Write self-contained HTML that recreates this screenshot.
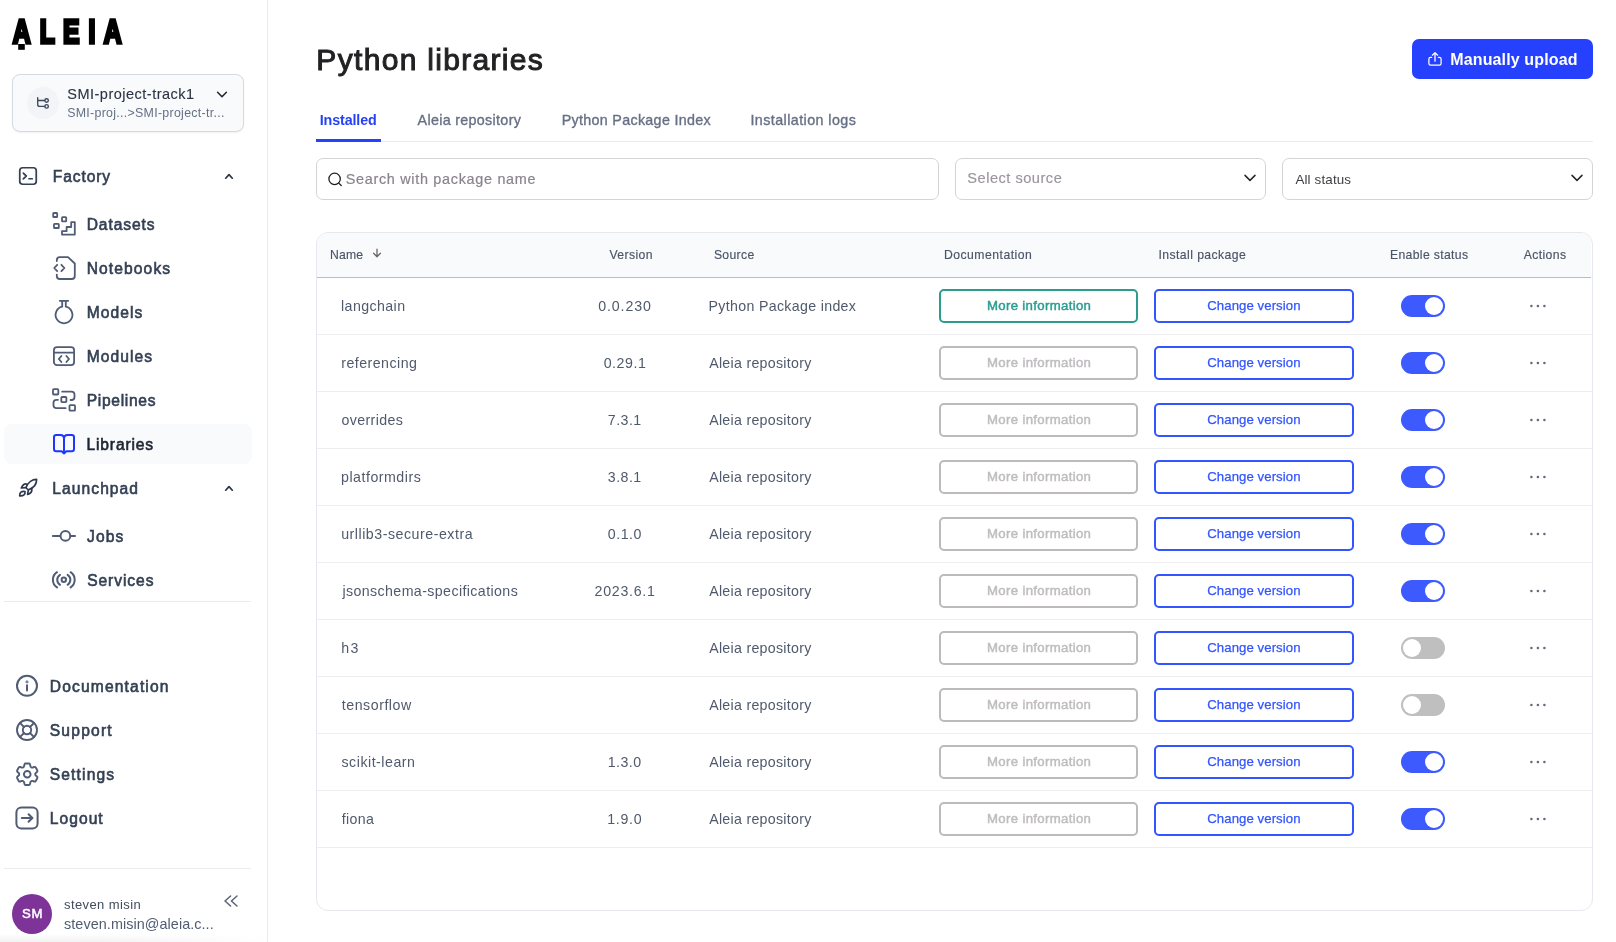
<!DOCTYPE html>
<html lang="en"><head><meta charset="utf-8"><title>Python libraries</title>
<style>
html,body{margin:0;padding:0;background:#fff;}
body{width:1616px;height:942px;position:relative;overflow:hidden;font-family:"Liberation Sans",sans-serif;}
.t{position:absolute;white-space:nowrap;display:block;}
svg{display:block;overflow:visible;}
aside,main{will-change:transform;}
</style></head><body>
<aside>
<div style="position:absolute;left:0px;top:0px;width:267px;height:942px;background:#fff;border-right:1px solid #e9ebf2;"></div>
<div style="position:absolute;left:0px;top:934px;width:267px;height:8px;background:linear-gradient(to bottom,rgba(238,238,240,0),rgba(230,230,233,.55));-webkit-mask-image:linear-gradient(to right,#000 35%,transparent 100%);mask-image:linear-gradient(to right,#000 35%,transparent 100%);"></div>
<svg style="position:absolute;left:0;top:0" width="140" height="60" viewBox="0 0 140 60"><text x="17.19 53.78 85.19 119.63 140.23" y="0" transform="translate(0,42.5) scale(0.74,1)" font-family="Liberation Sans, sans-serif" font-weight="700" font-size="33.4" fill="#000" stroke="#000" stroke-width="3.0" stroke-linejoin="miter" stroke-miterlimit="2" vector-effect="non-scaling-stroke">ALEIA</text><rect x="18.2" y="44" width="6.6" height="5.8" fill="#000"/></svg>
<div style="position:absolute;left:12px;top:74px;width:232px;height:58px;box-sizing:border-box;background:#f9fafb;border:1px solid #d5d9e3;border-radius:8px;box-shadow:0 1px 2px rgba(16,24,40,.06);"></div>
<div style="position:absolute;left:27px;top:87px;width:32px;height:32px;background:#f2f4f7;border-radius:50%;"></div>
<svg style="position:absolute;left:35px;top:95px;" width="16" height="16" viewBox="0 0 16 16" fill="none" stroke="#3d485c" stroke-width="1.35" stroke-linecap="round" stroke-linejoin="round"><path d="M2.7 2.6V9.4Q2.7 11.4 4.7 11.4H9.7M2.7 5.5H9.7"/><circle cx="11.6" cy="5.5" r="1.75"/><circle cx="11.6" cy="11.4" r="1.75"/></svg>
<span class="t" style="left:67.28px;top:85.01px;font-size:14.5px;line-height:19px;color:#2b3445;letter-spacing:0.493px;-webkit-text-stroke:0.12px #2b3445;">SMI-project-track1</span>
<span class="t" style="left:67.21px;top:105.21px;font-size:12.4px;line-height:16px;color:#667085;letter-spacing:0.288px;">SMI-proj...&gt;SMI-project-tr...</span>
<svg style="position:absolute;left:216px;top:89px;" width="12" height="12" viewBox="0 0 12 12" fill="none" stroke="#1d2433" stroke-width="1.5" stroke-linecap="round" stroke-linejoin="round"><path d="M1.6 3.2L6 7.8L10.4 3.2"/></svg>
<svg style="position:absolute;left:17px;top:165px;" width="22" height="22" viewBox="0 0 24 24" fill="none" stroke="#344054" stroke-width="1.9" stroke-linecap="round" stroke-linejoin="round"><rect x="3" y="3" width="18" height="18" rx="3.2"/><path d="M6.9 8.9L10.1 12L6.9 15.1M13.1 15H16.6"/></svg>
<span class="t" style="left:52.83px;top:166.81px;font-size:15.6px;line-height:20px;color:#344054;letter-spacing:0.892px;-webkit-text-stroke:0.6px #344054;">Factory</span>
<svg style="position:absolute;left:223px;top:169.9px;" width="12" height="12" viewBox="0 0 12 12" fill="none" stroke="#2b3445" stroke-width="1.7" stroke-linecap="round" stroke-linejoin="round"><path d="M2.7 8.2L6 4.6L9.3 8.2"/></svg>
<div style="position:absolute;left:4px;top:424px;width:248px;height:40px;background:#f9fafb;border-radius:8px;"></div>
<span class="t" style="left:86.66px;top:215.00px;font-size:15.6px;line-height:20px;color:#344054;letter-spacing:0.901px;-webkit-text-stroke:0.6px #344054;">Datasets</span>
<span class="t" style="left:86.66px;top:259.00px;font-size:15.6px;line-height:20px;color:#344054;letter-spacing:1.113px;-webkit-text-stroke:0.6px #344054;">Notebooks</span>
<span class="t" style="left:86.66px;top:303.00px;font-size:15.6px;line-height:20px;color:#344054;letter-spacing:1.098px;-webkit-text-stroke:0.6px #344054;">Models</span>
<span class="t" style="left:86.66px;top:347.00px;font-size:15.6px;line-height:20px;color:#344054;letter-spacing:1.089px;-webkit-text-stroke:0.6px #344054;">Modules</span>
<span class="t" style="left:86.66px;top:391.00px;font-size:15.6px;line-height:20px;color:#344054;letter-spacing:0.695px;-webkit-text-stroke:0.6px #344054;">Pipelines</span>
<span class="t" style="left:86.50px;top:435.00px;font-size:15.6px;line-height:20px;color:#1b2433;letter-spacing:0.851px;-webkit-text-stroke:0.6px #1b2433;">Libraries</span>
<svg style="position:absolute;left:52px;top:212px;" width="24" height="24" viewBox="0 0 24 24" fill="none" stroke="#505c74" stroke-width="1.8" stroke-linecap="round" stroke-linejoin="round"><rect x="1.2" y="1" width="4" height="4" rx=".6"/><rect x="10" y="5.2" width="4.2" height="4.2" rx=".6"/><rect x="2" y="11.8" width="4.8" height="4.2" rx=".6"/><path d="M10 22.6V19.2H14.6V15H19.2V10.2H22.8V22.6Z"/></svg>
<svg style="position:absolute;left:52px;top:256px;" width="24" height="24" viewBox="0 0 24 24" fill="none" stroke="#505c74" stroke-width="1.8" stroke-linecap="round" stroke-linejoin="round"><path d="M4.8 5V4.2Q4.8 1.2 7.8 1.2H16L22.8 7.5V20Q22.8 23 19.8 23H7.8Q4.8 23 4.8 20V18.6"/><path d="M5.2 8.8L2.2 12L5.2 15.2M9.4 8.8L12.4 12L9.4 15.2"/></svg>
<svg style="position:absolute;left:52px;top:300px;" width="24" height="24" viewBox="0 0 24 24" fill="none" stroke="#505c74" stroke-width="1.8" stroke-linecap="round" stroke-linejoin="round"><path d="M7.8 .8H16.2M10.2 .8V6.7M13.8 .8V6.7M10.2 6.7A8.4 8.4 0 1 0 13.8 6.7"/></svg>
<svg style="position:absolute;left:52px;top:344px;" width="24" height="24" viewBox="0 0 24 24" fill="none" stroke="#505c74" stroke-width="1.8" stroke-linecap="round" stroke-linejoin="round"><rect x="1.9" y="3.2" width="20.2" height="17.9" rx="3.2"/><path d="M1.9 8.7H22.1M9.4 12L6.8 15L9.4 18M14.4 12L17 15L14.4 18"/></svg>
<svg style="position:absolute;left:52px;top:388px;" width="24" height="24" viewBox="0 0 24 24" fill="none" stroke="#505c74" stroke-width="1.8" stroke-linecap="round" stroke-linejoin="round"><rect x="1" y="1.2" width="5.3" height="5.3" rx=".8"/><rect x="9.3" y="9" width="5.1" height="5.1" rx=".8"/><rect x="17.5" y="17.2" width="5.5" height="5.5" rx=".8"/><path d="M10.2 3.7H19.5Q22.5 3.7 22.5 6.7V9Q22.5 12 19.5 12H18.6M13.6 20.2H4.5Q1.5 20.2 1.5 17.2V14.8Q1.5 11.8 4.5 11.8H6"/></svg>
<svg style="position:absolute;left:52px;top:432px;" width="24" height="24" viewBox="0 0 24 24" fill="none" stroke="#1f36ff" stroke-width="2.0" stroke-linecap="round" stroke-linejoin="round"><path d="M12 21.4L9.6 19.3H4.3Q2 19.3 2 17V5.3Q2 3 4.3 3H8.5Q12 3 12 6.5V21.4L14.4 19.3H19.7Q22 19.3 22 17V5.3Q22 3 19.7 3H15.5Q12 3 12 6.5"/></svg>
<svg style="position:absolute;left:12px;top:472px;" width="32" height="32" viewBox="0 0 32 32" fill="none" stroke="#2d3850" stroke-width="1.7" stroke-linecap="round" stroke-linejoin="round"><path d="M24.6 7.3C20.5 7.2 16 10 14 15.6Q15 17.2 16.6 17.8C21.5 16 24.8 12 24.6 7.3Z"/><path d="M14.9 12.3Q11.5 10.8 9.3 16L13.9 15.7"/><path d="M16.4 17.9L15.6 22.4Q20.6 21 19.7 16.4"/><path d="M7.7 23.9C7.5 20.5 9.5 18.8 13 19.5C13.5 22.5 11.5 24.3 7.7 23.9Z"/></svg>
<span class="t" style="left:52.37px;top:479.00px;font-size:15.6px;line-height:20px;color:#344054;letter-spacing:1.056px;-webkit-text-stroke:0.6px #344054;">Launchpad</span>
<svg style="position:absolute;left:223px;top:481.90000000000003px;" width="12" height="12" viewBox="0 0 12 12" fill="none" stroke="#2b3445" stroke-width="1.7" stroke-linecap="round" stroke-linejoin="round"><path d="M2.7 8.2L6 4.6L9.3 8.2"/></svg>
<span class="t" style="left:87.08px;top:527.00px;font-size:15.6px;line-height:20px;color:#344054;letter-spacing:1.133px;-webkit-text-stroke:0.6px #344054;">Jobs</span>
<span class="t" style="left:87.13px;top:571.00px;font-size:15.6px;line-height:20px;color:#344054;letter-spacing:0.931px;-webkit-text-stroke:0.6px #344054;">Services</span>
<svg style="position:absolute;left:52px;top:524px;" width="24" height="24" viewBox="0 0 24 24" fill="none" stroke="#505c74" stroke-width="2.0" stroke-linecap="round" stroke-linejoin="round"><path d="M.9 11.9H7.8M19.2 11.9H23"/><circle cx="13.4" cy="11.9" r="4.85"/></svg>
<svg style="position:absolute;left:52px;top:568px;" width="24" height="24" viewBox="0 0 24 24" fill="none" stroke="#505c74" stroke-width="2.0" stroke-linecap="round" stroke-linejoin="round"><circle cx="11.8" cy="11.8" r="2.2"/><path d="M5 4.2A9.1 9.1 0 0 0 5 19.4M18.6 4.2A9.1 9.1 0 0 1 18.6 19.4M8 6.8A5.9 5.9 0 0 0 8 16.8M15.6 6.8A5.9 5.9 0 0 1 15.6 16.8"/></svg>
<div style="position:absolute;left:4px;top:601px;width:247px;height:1px;background:#eaecf0;"></div>
<span class="t" style="left:49.77px;top:676.70px;font-size:15.6px;line-height:20px;color:#344054;letter-spacing:1.153px;-webkit-text-stroke:0.6px #344054;">Documentation</span>
<span class="t" style="left:49.74px;top:720.70px;font-size:15.6px;line-height:20px;color:#344054;letter-spacing:1.223px;-webkit-text-stroke:0.6px #344054;">Support</span>
<span class="t" style="left:49.74px;top:764.70px;font-size:15.6px;line-height:20px;color:#344054;letter-spacing:1.153px;-webkit-text-stroke:0.6px #344054;">Settings</span>
<span class="t" style="left:49.77px;top:808.70px;font-size:15.6px;line-height:20px;color:#344054;letter-spacing:1.049px;-webkit-text-stroke:0.6px #344054;">Logout</span>
<svg style="position:absolute;left:15px;top:674px;" width="24" height="24" viewBox="0 0 24 24" fill="none" stroke="#505c74" stroke-width="2.0" stroke-linecap="round" stroke-linejoin="round"><circle cx="12" cy="11.8" r="10"/><path d="M12 11.2V16.4"/><circle cx="12" cy="7.9" r=".45" fill="#505c74"/></svg>
<svg style="position:absolute;left:15px;top:718px;" width="24" height="24" viewBox="0 0 24 24" fill="none" stroke="#505c74" stroke-width="1.9" stroke-linecap="round" stroke-linejoin="round"><circle cx="12" cy="12" r="10"/><circle cx="12" cy="12" r="4.2"/><path d="M4.9 4.9L9 9M19.1 4.9L15 9M4.9 19.1L9 15M19.1 19.1L15 15"/></svg>
<svg style="position:absolute;left:12.8px;top:759.7px;" width="28.5" height="28.5" viewBox="0 0 24 24" fill="none" stroke="#505c74" stroke-width="1.6" stroke-linecap="round" stroke-linejoin="round"><path d="M9.594 3.94c.09-.542.56-.94 1.11-.94h2.593c.55 0 1.02.398 1.11.94l.213 1.281c.063.374.313.686.645.87.074.04.147.083.22.127.324.196.72.257 1.075.124l1.217-.456a1.125 1.125 0 011.37.49l1.296 2.247a1.125 1.125 0 01-.26 1.431l-1.003.827c-.293.24-.438.613-.431.992a6.759 6.759 0 010 .255c-.007.378.138.75.43.99l1.005.828c.424.35.534.954.26 1.43l-1.298 2.247a1.125 1.125 0 01-1.369.491l-1.217-.456c-.355-.133-.75-.072-1.076.124a6.57 6.57 0 01-.22.128c-.331.183-.581.495-.644.869l-.213 1.28c-.09.543-.56.941-1.11.941h-2.594c-.55 0-1.02-.398-1.11-.94l-.213-1.281c-.062-.374-.312-.686-.644-.87a6.52 6.52 0 01-.22-.127c-.325-.196-.72-.257-1.076-.124l-1.217.456a1.125 1.125 0 01-1.369-.49l-1.297-2.247a1.125 1.125 0 01.26-1.431l1.004-.827c.292-.24.437-.613.43-.992a6.932 6.932 0 010-.255c.007-.378-.138-.75-.43-.99l-1.004-.828a1.125 1.125 0 01-.26-1.43l1.297-2.247a1.125 1.125 0 011.37-.491l1.216.456c.356.133.751.072 1.076-.124.072-.044.146-.087.22-.128.332-.183.582-.495.644-.869l.214-1.281z"/><circle cx="12" cy="12" r="2.8"/></svg>
<svg style="position:absolute;left:15px;top:806px;" width="24" height="24" viewBox="0 0 24 24" fill="none" stroke="#505c74" stroke-width="2.0" stroke-linecap="round" stroke-linejoin="round"><rect x="1.4" y="1.4" width="21.2" height="21.2" rx="5"/><path d="M6.8 12H17.2M13.6 8.2L17.4 12L13.6 15.8"/></svg>
<div style="position:absolute;left:4px;top:868px;width:247px;height:1px;background:#eaecf0;"></div>
<div style="position:absolute;left:12px;top:894px;width:40px;height:40px;background:#7d3397;border-radius:50%;"></div>
<span class="t" style="left:21.91px;top:905.41px;font-size:13.2px;line-height:17px;color:#fff;letter-spacing:0.752px;-webkit-text-stroke:0.5px #fff;">SM</span>
<span class="t" style="left:64.05px;top:896.00px;font-size:13px;line-height:17px;color:#414c60;letter-spacing:0.396px;">steven misin</span>
<span class="t" style="left:64.02px;top:914.80px;font-size:14.4px;line-height:19px;color:#505c72;letter-spacing:0.067px;">steven.misin@aleia.c...</span>
<svg style="position:absolute;left:222px;top:893px;" width="18" height="16" viewBox="0 0 18 16" fill="none" stroke="#5a6478" stroke-width="1.5" stroke-linecap="round" stroke-linejoin="round"><path d="M8.6 3L3 8L8.6 13M15 3L9.4 8L15 13"/></svg>
</aside>
<main>
<span class="t" style="left:316.37px;top:39.81px;font-size:30px;line-height:39px;color:#222224;letter-spacing:1.313px;-webkit-text-stroke:1.0px #222224;">Python libraries</span>
<div style="position:absolute;left:1412px;top:39px;width:181px;height:40px;background:#2541fd;border-radius:7px;"></div>
<svg style="position:absolute;left:1427px;top:51px;" width="16" height="16" viewBox="0 0 16 16" fill="none" stroke="#fff" stroke-width="1.25" stroke-linecap="round" stroke-linejoin="round"><path d="M4.6 6.4H3.6Q1.9 6.4 1.9 8.1V12.4Q1.9 14.1 3.6 14.1H12.4Q14.1 14.1 14.1 12.4V8.1Q14.1 6.4 12.4 6.4H11.4M8 10.2V1.8M5.4 4.2L8 1.6L10.6 4.2"/></svg>
<span class="t" style="left:1450.24px;top:49.00px;font-size:16px;line-height:21px;color:#fff;letter-spacing:0.134px;font-weight:700;">Manually upload</span>
<div style="position:absolute;left:316px;top:141px;width:1277px;height:1px;background:#eaecf0;"></div>
<div style="position:absolute;left:316px;top:139px;width:65px;height:3px;background:#2541fd;"></div>
<span class="t" style="left:319.65px;top:111.20px;font-size:14.3px;line-height:19px;color:#2541f5;letter-spacing:-0.106px;font-weight:700;">Installed</span>
<span class="t" style="left:417.60px;top:111.20px;font-size:14.3px;line-height:19px;color:#667085;letter-spacing:0.315px;-webkit-text-stroke:0.35px #667085;">Aleia repository</span>
<span class="t" style="left:561.67px;top:111.20px;font-size:14.3px;line-height:19px;color:#667085;letter-spacing:0.312px;-webkit-text-stroke:0.35px #667085;">Python Package Index</span>
<span class="t" style="left:750.40px;top:111.20px;font-size:14.3px;line-height:19px;color:#667085;letter-spacing:0.430px;-webkit-text-stroke:0.35px #667085;">Installation logs</span>
<div style="position:absolute;left:316px;top:158px;width:623px;height:42px;box-sizing:border-box;background:#fff;border:1px solid #d4d3d8;border-radius:7px;"></div>
<svg style="position:absolute;left:327px;top:170.6px;" width="16" height="16" viewBox="0 0 16 16" fill="none" stroke="#1c1c1e" stroke-width="1.25" stroke-linecap="round" stroke-linejoin="round"><circle cx="7.6" cy="7.9" r="5.7"/><path d="M11.8 12.1L14.2 14.5"/></svg>
<span class="t" style="left:345.69px;top:170.01px;font-size:14.4px;line-height:19px;color:#8a838e;letter-spacing:0.706px;-webkit-text-stroke:0.2px #8a838e;">Search with package name</span>
<div style="position:absolute;left:955px;top:158px;width:311px;height:42px;box-sizing:border-box;background:#fff;border:1px solid #d4d3d8;border-radius:7px;"></div>
<span class="t" style="left:967.28px;top:168.80px;font-size:14.6px;line-height:19px;color:#9a949c;letter-spacing:0.506px;-webkit-text-stroke:0.15px #9a949c;">Select source</span>
<svg style="position:absolute;left:1243px;top:172px;" width="14" height="12" viewBox="0 0 14 12" fill="none" stroke="#26262b" stroke-width="1.5" stroke-linecap="round" stroke-linejoin="round"><path d="M2 3.4L7 8.4L12 3.4"/></svg>
<div style="position:absolute;left:1282px;top:158px;width:311px;height:42px;box-sizing:border-box;background:#fff;border:1px solid #d4d3d8;border-radius:7px;"></div>
<span class="t" style="left:1295.41px;top:171.00px;font-size:13.4px;line-height:17px;color:#3d3d42;letter-spacing:0.147px;">All status</span>
<svg style="position:absolute;left:1570px;top:172px;" width="14" height="12" viewBox="0 0 14 12" fill="none" stroke="#26262b" stroke-width="1.5" stroke-linecap="round" stroke-linejoin="round"><path d="M2 3.4L7 8.4L12 3.4"/></svg>
<div style="position:absolute;left:316px;top:232px;width:1277px;height:679px;box-sizing:border-box;background:#fff;border:1px solid #e7e8ee;border-radius:12px;overflow:hidden;"><div style="position:absolute;left:0;top:0;width:1274px;height:44px;background:#f9fafb;"></div><div style="position:absolute;left:0;top:44px;width:1274px;height:1px;background:#bfbbbf;"></div></div>
<span class="t" style="left:330.11px;top:246.81px;font-size:12.2px;line-height:16px;color:#4a5567;letter-spacing:0.152px;-webkit-text-stroke:0.15px #4a5567;">Name</span>
<svg style="position:absolute;left:371px;top:247px;" width="12" height="12" viewBox="0 0 12 12" fill="none" stroke="#6d6470" stroke-width="1.3" stroke-linecap="round" stroke-linejoin="round"><path d="M6 2.2V9.6M2.6 6.2L6 9.8L9.4 6.2"/></svg>
<span class="t" style="left:609.48px;top:246.81px;font-size:12.2px;line-height:16px;color:#4a5567;letter-spacing:0.397px;-webkit-text-stroke:0.15px #4a5567;">Version</span>
<span class="t" style="left:713.91px;top:246.81px;font-size:12.2px;line-height:16px;color:#4a5567;letter-spacing:0.334px;-webkit-text-stroke:0.15px #4a5567;">Source</span>
<span class="t" style="left:943.90px;top:246.81px;font-size:12.2px;line-height:16px;color:#4a5567;letter-spacing:0.498px;-webkit-text-stroke:0.15px #4a5567;">Documentation</span>
<span class="t" style="left:1158.55px;top:246.81px;font-size:12.2px;line-height:16px;color:#4a5567;letter-spacing:0.420px;-webkit-text-stroke:0.15px #4a5567;">Install package</span>
<span class="t" style="left:1389.91px;top:246.81px;font-size:12.2px;line-height:16px;color:#4a5567;letter-spacing:0.361px;-webkit-text-stroke:0.15px #4a5567;">Enable status</span>
<span class="t" style="left:1523.65px;top:246.81px;font-size:12.2px;line-height:16px;color:#4a5567;letter-spacing:0.403px;-webkit-text-stroke:0.15px #4a5567;">Actions</span>
<div style="position:absolute;left:317px;top:334px;width:1275px;height:1px;background:#eeeef1;"></div>
<span class="t" style="left:341.06px;top:297.00px;font-size:14.2px;line-height:18px;color:#505a6d;letter-spacing:0.411px;">langchain</span>
<span class="t" style="left:598.20px;top:297.00px;font-size:14.2px;line-height:18px;color:#505a6d;letter-spacing:0.890px;">0.0.230</span>
<span class="t" style="left:708.46px;top:297.00px;font-size:14.2px;line-height:18px;color:#505a6d;letter-spacing:0.331px;">Python Package index</span>
<div style="position:absolute;left:939px;top:289px;width:199px;height:34px;box-sizing:border-box;border:2px solid #2a9d8f;border-radius:5px;background:#fff;"></div>
<span class="t" style="left:986.91px;top:297.00px;font-size:13.2px;line-height:17px;color:#2a9d8f;letter-spacing:0.338px;-webkit-text-stroke:0.45px #2a9d8f;">More information</span>
<div style="position:absolute;left:1154px;top:289px;width:200px;height:34px;box-sizing:border-box;border:2px solid #3355ff;border-radius:5px;background:#fff;"></div>
<span class="t" style="left:1207.24px;top:297.00px;font-size:13.2px;line-height:17px;color:#3355ff;letter-spacing:0.068px;-webkit-text-stroke:0.25px #3355ff;">Change version</span>
<div style="position:absolute;left:1401px;top:295px;width:44px;height:22px;background:#3d5afe;border-radius:11px;"><div style="position:absolute;left:24px;top:2px;width:18px;height:18px;border-radius:50%;background:#fff"></div></div>
<svg style="position:absolute;left:1528px;top:302px" width="20" height="8" viewBox="0 0 20 8" fill="#70667a"><circle cx="3.4" cy="4" r="1.3"/><circle cx="9.9" cy="4" r="1.3"/><circle cx="16.4" cy="4" r="1.3"/></svg>
<div style="position:absolute;left:317px;top:391px;width:1275px;height:1px;background:#eeeef1;"></div>
<span class="t" style="left:341.18px;top:354.00px;font-size:14.2px;line-height:18px;color:#505a6d;letter-spacing:0.480px;">referencing</span>
<span class="t" style="left:603.63px;top:354.00px;font-size:14.2px;line-height:18px;color:#505a6d;letter-spacing:0.574px;">0.29.1</span>
<span class="t" style="left:709.17px;top:354.00px;font-size:14.2px;line-height:18px;color:#505a6d;letter-spacing:0.291px;">Aleia repository</span>
<div style="position:absolute;left:939px;top:346px;width:199px;height:34px;box-sizing:border-box;border:2px solid #bdb9bc;border-radius:5px;background:#fff;"></div>
<span class="t" style="left:987.07px;top:354.00px;font-size:13.2px;line-height:17px;color:#bfbcbf;letter-spacing:0.325px;-webkit-text-stroke:0.45px #bfbcbf;">More information</span>
<div style="position:absolute;left:1154px;top:346px;width:200px;height:34px;box-sizing:border-box;border:2px solid #3355ff;border-radius:5px;background:#fff;"></div>
<span class="t" style="left:1207.24px;top:354.00px;font-size:13.2px;line-height:17px;color:#3355ff;letter-spacing:0.068px;-webkit-text-stroke:0.25px #3355ff;">Change version</span>
<div style="position:absolute;left:1401px;top:352px;width:44px;height:22px;background:#3d5afe;border-radius:11px;"><div style="position:absolute;left:24px;top:2px;width:18px;height:18px;border-radius:50%;background:#fff"></div></div>
<svg style="position:absolute;left:1528px;top:359px" width="20" height="8" viewBox="0 0 20 8" fill="#70667a"><circle cx="3.4" cy="4" r="1.3"/><circle cx="9.9" cy="4" r="1.3"/><circle cx="16.4" cy="4" r="1.3"/></svg>
<div style="position:absolute;left:317px;top:448px;width:1275px;height:1px;background:#eeeef1;"></div>
<span class="t" style="left:341.43px;top:411.00px;font-size:14.2px;line-height:18px;color:#505a6d;letter-spacing:0.382px;">overrides</span>
<span class="t" style="left:607.77px;top:411.00px;font-size:14.2px;line-height:18px;color:#505a6d;letter-spacing:0.476px;">7.3.1</span>
<span class="t" style="left:709.17px;top:411.00px;font-size:14.2px;line-height:18px;color:#505a6d;letter-spacing:0.291px;">Aleia repository</span>
<div style="position:absolute;left:939px;top:403px;width:199px;height:34px;box-sizing:border-box;border:2px solid #bdb9bc;border-radius:5px;background:#fff;"></div>
<span class="t" style="left:987.07px;top:411.00px;font-size:13.2px;line-height:17px;color:#bfbcbf;letter-spacing:0.325px;-webkit-text-stroke:0.45px #bfbcbf;">More information</span>
<div style="position:absolute;left:1154px;top:403px;width:200px;height:34px;box-sizing:border-box;border:2px solid #3355ff;border-radius:5px;background:#fff;"></div>
<span class="t" style="left:1207.24px;top:411.00px;font-size:13.2px;line-height:17px;color:#3355ff;letter-spacing:0.068px;-webkit-text-stroke:0.25px #3355ff;">Change version</span>
<div style="position:absolute;left:1401px;top:409px;width:44px;height:22px;background:#3d5afe;border-radius:11px;"><div style="position:absolute;left:24px;top:2px;width:18px;height:18px;border-radius:50%;background:#fff"></div></div>
<svg style="position:absolute;left:1528px;top:416px" width="20" height="8" viewBox="0 0 20 8" fill="#70667a"><circle cx="3.4" cy="4" r="1.3"/><circle cx="9.9" cy="4" r="1.3"/><circle cx="16.4" cy="4" r="1.3"/></svg>
<div style="position:absolute;left:317px;top:505px;width:1275px;height:1px;background:#eeeef1;"></div>
<span class="t" style="left:341.05px;top:468.00px;font-size:14.2px;line-height:18px;color:#505a6d;letter-spacing:0.506px;">platformdirs</span>
<span class="t" style="left:607.79px;top:468.00px;font-size:14.2px;line-height:18px;color:#505a6d;letter-spacing:0.472px;">3.8.1</span>
<span class="t" style="left:709.17px;top:468.00px;font-size:14.2px;line-height:18px;color:#505a6d;letter-spacing:0.291px;">Aleia repository</span>
<div style="position:absolute;left:939px;top:460px;width:199px;height:34px;box-sizing:border-box;border:2px solid #bdb9bc;border-radius:5px;background:#fff;"></div>
<span class="t" style="left:987.07px;top:468.00px;font-size:13.2px;line-height:17px;color:#bfbcbf;letter-spacing:0.325px;-webkit-text-stroke:0.45px #bfbcbf;">More information</span>
<div style="position:absolute;left:1154px;top:460px;width:200px;height:34px;box-sizing:border-box;border:2px solid #3355ff;border-radius:5px;background:#fff;"></div>
<span class="t" style="left:1207.24px;top:468.00px;font-size:13.2px;line-height:17px;color:#3355ff;letter-spacing:0.068px;-webkit-text-stroke:0.25px #3355ff;">Change version</span>
<div style="position:absolute;left:1401px;top:466px;width:44px;height:22px;background:#3d5afe;border-radius:11px;"><div style="position:absolute;left:24px;top:2px;width:18px;height:18px;border-radius:50%;background:#fff"></div></div>
<svg style="position:absolute;left:1528px;top:473px" width="20" height="8" viewBox="0 0 20 8" fill="#70667a"><circle cx="3.4" cy="4" r="1.3"/><circle cx="9.9" cy="4" r="1.3"/><circle cx="16.4" cy="4" r="1.3"/></svg>
<div style="position:absolute;left:317px;top:562px;width:1275px;height:1px;background:#eeeef1;"></div>
<span class="t" style="left:341.18px;top:525.00px;font-size:14.2px;line-height:18px;color:#505a6d;letter-spacing:0.526px;">urllib3-secure-extra</span>
<span class="t" style="left:607.69px;top:525.00px;font-size:14.2px;line-height:18px;color:#505a6d;letter-spacing:0.568px;">0.1.0</span>
<span class="t" style="left:709.17px;top:525.00px;font-size:14.2px;line-height:18px;color:#505a6d;letter-spacing:0.291px;">Aleia repository</span>
<div style="position:absolute;left:939px;top:517px;width:199px;height:34px;box-sizing:border-box;border:2px solid #bdb9bc;border-radius:5px;background:#fff;"></div>
<span class="t" style="left:987.07px;top:525.00px;font-size:13.2px;line-height:17px;color:#bfbcbf;letter-spacing:0.325px;-webkit-text-stroke:0.45px #bfbcbf;">More information</span>
<div style="position:absolute;left:1154px;top:517px;width:200px;height:34px;box-sizing:border-box;border:2px solid #3355ff;border-radius:5px;background:#fff;"></div>
<span class="t" style="left:1207.24px;top:525.00px;font-size:13.2px;line-height:17px;color:#3355ff;letter-spacing:0.068px;-webkit-text-stroke:0.25px #3355ff;">Change version</span>
<div style="position:absolute;left:1401px;top:523px;width:44px;height:22px;background:#3d5afe;border-radius:11px;"><div style="position:absolute;left:24px;top:2px;width:18px;height:18px;border-radius:50%;background:#fff"></div></div>
<svg style="position:absolute;left:1528px;top:530px" width="20" height="8" viewBox="0 0 20 8" fill="#70667a"><circle cx="3.4" cy="4" r="1.3"/><circle cx="9.9" cy="4" r="1.3"/><circle cx="16.4" cy="4" r="1.3"/></svg>
<div style="position:absolute;left:317px;top:619px;width:1275px;height:1px;background:#eeeef1;"></div>
<span class="t" style="left:342.42px;top:582.00px;font-size:14.2px;line-height:18px;color:#505a6d;letter-spacing:0.406px;">jsonschema-specifications</span>
<span class="t" style="left:594.62px;top:582.00px;font-size:14.2px;line-height:18px;color:#505a6d;letter-spacing:0.712px;">2023.6.1</span>
<span class="t" style="left:709.17px;top:582.00px;font-size:14.2px;line-height:18px;color:#505a6d;letter-spacing:0.291px;">Aleia repository</span>
<div style="position:absolute;left:939px;top:574px;width:199px;height:34px;box-sizing:border-box;border:2px solid #bdb9bc;border-radius:5px;background:#fff;"></div>
<span class="t" style="left:987.07px;top:582.00px;font-size:13.2px;line-height:17px;color:#bfbcbf;letter-spacing:0.325px;-webkit-text-stroke:0.45px #bfbcbf;">More information</span>
<div style="position:absolute;left:1154px;top:574px;width:200px;height:34px;box-sizing:border-box;border:2px solid #3355ff;border-radius:5px;background:#fff;"></div>
<span class="t" style="left:1207.24px;top:582.00px;font-size:13.2px;line-height:17px;color:#3355ff;letter-spacing:0.068px;-webkit-text-stroke:0.25px #3355ff;">Change version</span>
<div style="position:absolute;left:1401px;top:580px;width:44px;height:22px;background:#3d5afe;border-radius:11px;"><div style="position:absolute;left:24px;top:2px;width:18px;height:18px;border-radius:50%;background:#fff"></div></div>
<svg style="position:absolute;left:1528px;top:587px" width="20" height="8" viewBox="0 0 20 8" fill="#70667a"><circle cx="3.4" cy="4" r="1.3"/><circle cx="9.9" cy="4" r="1.3"/><circle cx="16.4" cy="4" r="1.3"/></svg>
<div style="position:absolute;left:317px;top:676px;width:1275px;height:1px;background:#eeeef1;"></div>
<span class="t" style="left:341.20px;top:639.00px;font-size:14.2px;line-height:18px;color:#505a6d;letter-spacing:1.412px;">h3</span>
<span class="t" style="left:709.17px;top:639.00px;font-size:14.2px;line-height:18px;color:#505a6d;letter-spacing:0.291px;">Aleia repository</span>
<div style="position:absolute;left:939px;top:631px;width:199px;height:34px;box-sizing:border-box;border:2px solid #bdb9bc;border-radius:5px;background:#fff;"></div>
<span class="t" style="left:987.07px;top:639.00px;font-size:13.2px;line-height:17px;color:#bfbcbf;letter-spacing:0.325px;-webkit-text-stroke:0.45px #bfbcbf;">More information</span>
<div style="position:absolute;left:1154px;top:631px;width:200px;height:34px;box-sizing:border-box;border:2px solid #3355ff;border-radius:5px;background:#fff;"></div>
<span class="t" style="left:1207.24px;top:639.00px;font-size:13.2px;line-height:17px;color:#3355ff;letter-spacing:0.068px;-webkit-text-stroke:0.25px #3355ff;">Change version</span>
<div style="position:absolute;left:1401px;top:637px;width:44px;height:22px;background:#bfbfbf;border-radius:11px;"><div style="position:absolute;left:2px;top:2px;width:18px;height:18px;border-radius:50%;background:#fff"></div></div>
<svg style="position:absolute;left:1528px;top:644px" width="20" height="8" viewBox="0 0 20 8" fill="#70667a"><circle cx="3.4" cy="4" r="1.3"/><circle cx="9.9" cy="4" r="1.3"/><circle cx="16.4" cy="4" r="1.3"/></svg>
<div style="position:absolute;left:317px;top:733px;width:1275px;height:1px;background:#eeeef1;"></div>
<span class="t" style="left:341.84px;top:696.00px;font-size:14.2px;line-height:18px;color:#505a6d;letter-spacing:0.521px;">tensorflow</span>
<span class="t" style="left:709.17px;top:696.00px;font-size:14.2px;line-height:18px;color:#505a6d;letter-spacing:0.291px;">Aleia repository</span>
<div style="position:absolute;left:939px;top:688px;width:199px;height:34px;box-sizing:border-box;border:2px solid #bdb9bc;border-radius:5px;background:#fff;"></div>
<span class="t" style="left:987.07px;top:696.00px;font-size:13.2px;line-height:17px;color:#bfbcbf;letter-spacing:0.325px;-webkit-text-stroke:0.45px #bfbcbf;">More information</span>
<div style="position:absolute;left:1154px;top:688px;width:200px;height:34px;box-sizing:border-box;border:2px solid #3355ff;border-radius:5px;background:#fff;"></div>
<span class="t" style="left:1207.24px;top:696.00px;font-size:13.2px;line-height:17px;color:#3355ff;letter-spacing:0.068px;-webkit-text-stroke:0.25px #3355ff;">Change version</span>
<div style="position:absolute;left:1401px;top:694px;width:44px;height:22px;background:#bfbfbf;border-radius:11px;"><div style="position:absolute;left:2px;top:2px;width:18px;height:18px;border-radius:50%;background:#fff"></div></div>
<svg style="position:absolute;left:1528px;top:701px" width="20" height="8" viewBox="0 0 20 8" fill="#70667a"><circle cx="3.4" cy="4" r="1.3"/><circle cx="9.9" cy="4" r="1.3"/><circle cx="16.4" cy="4" r="1.3"/></svg>
<div style="position:absolute;left:317px;top:790px;width:1275px;height:1px;background:#eeeef1;"></div>
<span class="t" style="left:341.52px;top:753.00px;font-size:14.2px;line-height:18px;color:#505a6d;letter-spacing:0.513px;">scikit-learn</span>
<span class="t" style="left:607.63px;top:753.00px;font-size:14.2px;line-height:18px;color:#505a6d;letter-spacing:0.497px;">1.3.0</span>
<span class="t" style="left:709.17px;top:753.00px;font-size:14.2px;line-height:18px;color:#505a6d;letter-spacing:0.291px;">Aleia repository</span>
<div style="position:absolute;left:939px;top:745px;width:199px;height:34px;box-sizing:border-box;border:2px solid #bdb9bc;border-radius:5px;background:#fff;"></div>
<span class="t" style="left:987.07px;top:753.00px;font-size:13.2px;line-height:17px;color:#bfbcbf;letter-spacing:0.325px;-webkit-text-stroke:0.45px #bfbcbf;">More information</span>
<div style="position:absolute;left:1154px;top:745px;width:200px;height:34px;box-sizing:border-box;border:2px solid #3355ff;border-radius:5px;background:#fff;"></div>
<span class="t" style="left:1207.24px;top:753.00px;font-size:13.2px;line-height:17px;color:#3355ff;letter-spacing:0.068px;-webkit-text-stroke:0.25px #3355ff;">Change version</span>
<div style="position:absolute;left:1401px;top:751px;width:44px;height:22px;background:#3d5afe;border-radius:11px;"><div style="position:absolute;left:24px;top:2px;width:18px;height:18px;border-radius:50%;background:#fff"></div></div>
<svg style="position:absolute;left:1528px;top:758px" width="20" height="8" viewBox="0 0 20 8" fill="#70667a"><circle cx="3.4" cy="4" r="1.3"/><circle cx="9.9" cy="4" r="1.3"/><circle cx="16.4" cy="4" r="1.3"/></svg>
<div style="position:absolute;left:317px;top:847px;width:1275px;height:1px;background:#eeeef1;"></div>
<span class="t" style="left:341.83px;top:810.00px;font-size:14.2px;line-height:18px;color:#505a6d;letter-spacing:0.319px;">fiona</span>
<span class="t" style="left:607.16px;top:810.00px;font-size:14.2px;line-height:18px;color:#505a6d;letter-spacing:0.726px;">1.9.0</span>
<span class="t" style="left:709.17px;top:810.00px;font-size:14.2px;line-height:18px;color:#505a6d;letter-spacing:0.291px;">Aleia repository</span>
<div style="position:absolute;left:939px;top:802px;width:199px;height:34px;box-sizing:border-box;border:2px solid #bdb9bc;border-radius:5px;background:#fff;"></div>
<span class="t" style="left:987.07px;top:810.00px;font-size:13.2px;line-height:17px;color:#bfbcbf;letter-spacing:0.325px;-webkit-text-stroke:0.45px #bfbcbf;">More information</span>
<div style="position:absolute;left:1154px;top:802px;width:200px;height:34px;box-sizing:border-box;border:2px solid #3355ff;border-radius:5px;background:#fff;"></div>
<span class="t" style="left:1207.24px;top:810.00px;font-size:13.2px;line-height:17px;color:#3355ff;letter-spacing:0.068px;-webkit-text-stroke:0.25px #3355ff;">Change version</span>
<div style="position:absolute;left:1401px;top:808px;width:44px;height:22px;background:#3d5afe;border-radius:11px;"><div style="position:absolute;left:24px;top:2px;width:18px;height:18px;border-radius:50%;background:#fff"></div></div>
<svg style="position:absolute;left:1528px;top:815px" width="20" height="8" viewBox="0 0 20 8" fill="#70667a"><circle cx="3.4" cy="4" r="1.3"/><circle cx="9.9" cy="4" r="1.3"/><circle cx="16.4" cy="4" r="1.3"/></svg>
</main>
</body></html>
